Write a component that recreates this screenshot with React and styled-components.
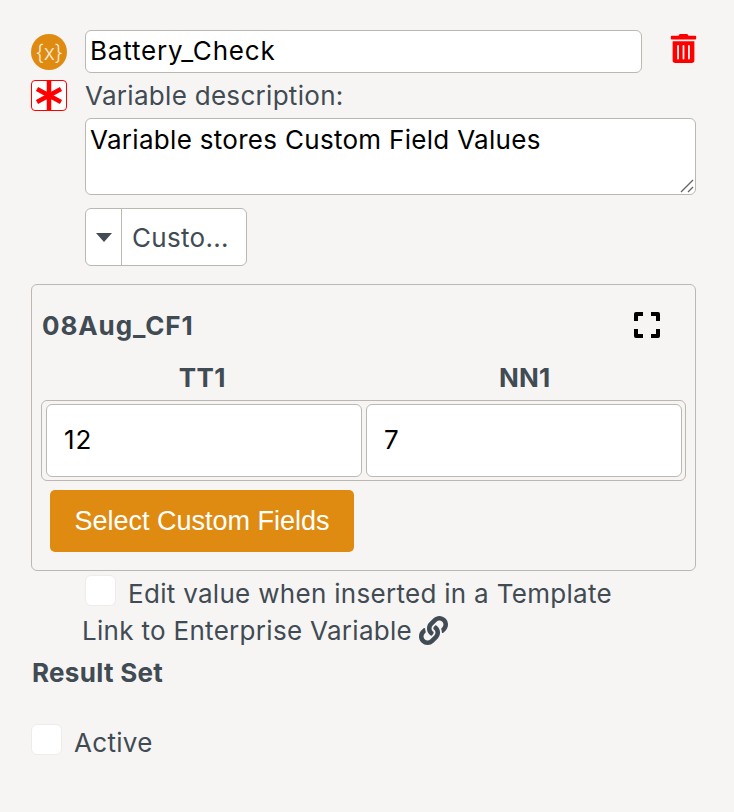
import React from 'react';
import styled, { createGlobalStyle } from 'styled-components';
import { FaLink, FaTrashAlt } from 'react-icons/fa';

const BODY_FONT = 'Inter, "Open Sans", sans-serif';

const GlobalStyle = createGlobalStyle`
  html, body {
    margin: 0;
    background: #f6f5f4;
  }

  body {
    font-family: ${BODY_FONT};
    color: #414b53;
    letter-spacing: 0.3px;
  }

  * {
    box-sizing: border-box;
  }
`;

const Page = styled.div`
  display: flex;
  flex-direction: column;
  width: 734px;
  height: 812px;
  padding: 30px 38px 0 31px;
  overflow: hidden;
`;

const VariableRow = styled.div`
  display: flex;
  gap: 18px;
`;

const IconColumn = styled.div`
  display: flex;
  flex-direction: column;
  width: 36px;
  flex: none;
  padding-top: 4px;
  gap: 10px;
`;

const VariableBadge = styled.div`
  display: flex;
  align-items: center;
  justify-content: center;
  width: 36px;
  height: 36px;
  border-radius: 50%;
  background: #df8b12;
  color: #f9ecd8;
  font-size: 21px;
  font-weight: 300;
  letter-spacing: -0.5px;
`;

const RequiredBox = styled.div`
  display: flex;
  align-items: center;
  justify-content: center;
  width: 36px;
  height: 31px;
  border: 1px solid #f00;
  border-radius: 4px;
  background: #fff;
`;

const FormColumn = styled.div`
  display: flex;
  flex-direction: column;
  flex: 1;
`;

const NameRow = styled.div`
  display: flex;
  align-items: flex-start;
  justify-content: space-between;
`;

const NameInput = styled.input`
  width: 557px;
  height: 43px;
  padding: 0 4px 2px;
  border: 1px solid #bbb7b3;
  border-radius: 6px;
  background: #fff;
  color: #000;
  font: 26px ${BODY_FONT};
  letter-spacing: 0.8px;
  outline: none;
`;

const TrashButton = styled.div`
  display: flex;
  color: #f00;
  font-size: 29px;
  margin: 4px -2px 0 0;
`;

const DescriptionLabel = styled.label`
  font-size: 26px;
  line-height: 32px;
  margin: 7px 0 6px;
`;

const DescriptionWrap = styled.div`
  position: relative;
  height: 77px;
`;

const DescriptionInput = styled.textarea`
  display: block;
  width: 100%;
  height: 100%;
  padding: 5px 4px;
  border: 1px solid #bbb7b3;
  border-radius: 6px;
  background: #fff;
  color: #000;
  font: 26px/32px ${BODY_FONT};
  letter-spacing: 0.3px;
  outline: none;
  resize: none;
`;

const ResizeGrip = styled.svg`
  position: absolute;
  right: 2px;
  bottom: 2px;
`;

const TypeSelect = styled.div`
  display: flex;
  width: 162px;
  height: 58px;
  margin-top: 13px;
  border: 1px solid #bbb7b3;
  border-radius: 6px;
  background: #fff;
`;

const Caret = styled.div`
  display: flex;
  align-items: center;
  justify-content: center;
  width: 36px;
  border-right: 1px solid #bbb7b3;
`;

const CaretShape = styled.span`
  width: 0;
  height: 0;
  border-left: 8px solid transparent;
  border-right: 8px solid transparent;
  border-top: 9px solid #414b53;
`;

const TypeLabel = styled.div`
  display: flex;
  align-items: center;
  padding-left: 10px;
  font-size: 26px;
`;

const CustomFieldPanel = styled.section`
  display: flex;
  flex-direction: column;
  height: 287px;
  margin-top: 18px;
  padding: 0 9px;
  border: 1px solid #bbb7b3;
  border-radius: 6px;
`;

const PanelHeader = styled.div`
  display: flex;
  align-items: center;
  justify-content: space-between;
  height: 80px;
  padding: 0 26px 0 1px;
`;

const PanelTitle = styled.h2`
  margin: 0;
  font-size: 26px;
  font-weight: 700;
  letter-spacing: 0.9px;
`;

const ColumnHeads = styled.div`
  display: grid;
  grid-template-columns: 1fr 1fr;
  height: 35px;
`;

const ColumnHead = styled.div`
  text-align: center;
  font-size: 26px;
  font-weight: 700;
  line-height: 26px;
`;

const FieldTable = styled.div`
  display: grid;
  grid-template-columns: 316px 316px;
  gap: 4px;
  width: 645px;
  height: 81px;
  padding: 3px 4px;
  border: 1px solid #bbb7b3;
  border-radius: 6px;
`;

const FieldCell = styled.input`
  width: 100%;
  height: 73px;
  padding: 0 17px 2px;
  border: 1px solid #bbb7b3;
  border-radius: 6px;
  background: #fff;
  color: #000;
  font: 26px ${BODY_FONT};
  letter-spacing: 1px;
  outline: none;
`;

const SelectButton = styled.button`
  width: 304px;
  height: 62px;
  margin: 9px 0 0 9px;
  padding: 0;
  border: 0;
  border-radius: 5px;
  background: #df8b12;
  color: #fff;
  font: 27px "Liberation Sans", Arial, sans-serif;
`;

const CheckRow = styled.label`
  display: flex;
  gap: 12px;
  height: 31px;
  margin-left: ${(p) => p.$indent || 0}px;
  margin-top: ${(p) => p.$top || 0}px;
  font-size: 26px;
`;

const CheckText = styled.span`
  line-height: 38px;
`;

const CheckBox = styled.span`
  width: 31px;
  height: 31px;
  flex: none;
  border: 1px solid #eeecea;
  border-radius: 6px;
  background: #fff;
`;

const LinkRow = styled.div`
  display: flex;
  align-items: center;
  gap: 7px;
  height: 32px;
  margin: 8px 0 0 51px;
  font-size: 26px;
`;

const LinkIcon = styled(FaLink)`
  font-size: 29px;
`;

const SectionTitle = styled.h3`
  margin: 11px 0 0 1px;
  font-size: 26px;
  line-height: 32px;
  font-weight: 700;
`;

function Asterisk() {
  return (
    <svg width="28" height="29" viewBox="0 0 28 29" fill="none" stroke="#f00" strokeWidth="4.5">
      <path d="M14 0v29M2 8l24 13M26 8L2 21" />
    </svg>
  );
}

function ExpandIcon() {
  return (
    <svg width="26" height="26" viewBox="0 0 26 26" fill="none" stroke="#000" strokeWidth="4" strokeLinejoin="round">
      <path d="M2 9V2h7M17 2h7v7M24 17v7h-7M9 24H2v-7" />
    </svg>
  );
}

export default function App() {
  return (
    <Page>
      <GlobalStyle />
      <VariableRow>
        <IconColumn>
          <VariableBadge>{'{x}'}</VariableBadge>
          <RequiredBox>
            <Asterisk />
          </RequiredBox>
        </IconColumn>
        <FormColumn>
          <NameRow>
            <NameInput value="Battery_Check" readOnly />
            <TrashButton>
              <FaTrashAlt />
            </TrashButton>
          </NameRow>
          <DescriptionLabel>Variable description:</DescriptionLabel>
          <DescriptionWrap>
            <DescriptionInput value="Variable stores Custom Field Values" readOnly />
            <ResizeGrip width="14" height="14" viewBox="0 0 14 14" stroke="#666" strokeWidth="1.4">
              <path d="M1 13L13 1M8 13l5-5" />
            </ResizeGrip>
          </DescriptionWrap>
          <TypeSelect>
            <Caret>
              <CaretShape />
            </Caret>
            <TypeLabel>Custo...</TypeLabel>
          </TypeSelect>
        </FormColumn>
      </VariableRow>
      <CustomFieldPanel>
        <PanelHeader>
          <PanelTitle>08Aug_CF1</PanelTitle>
          <ExpandIcon />
        </PanelHeader>
        <ColumnHeads>
          <ColumnHead>TT1</ColumnHead>
          <ColumnHead>NN1</ColumnHead>
        </ColumnHeads>
        <FieldTable>
          <FieldCell value="12" readOnly />
          <FieldCell value="7" readOnly />
        </FieldTable>
        <SelectButton>Select Custom Fields</SelectButton>
      </CustomFieldPanel>
      <CheckRow $indent={54} $top={4}>
        <CheckBox />
        <CheckText>Edit value when inserted in a Template</CheckText>
      </CheckRow>
      <LinkRow>
        Link to Enterprise Variable
        <LinkIcon />
      </LinkRow>
      <SectionTitle>Result Set</SectionTitle>
      <CheckRow $top={35}>
        <CheckBox />
        <CheckText>Active</CheckText>
      </CheckRow>
    </Page>
  );
}
